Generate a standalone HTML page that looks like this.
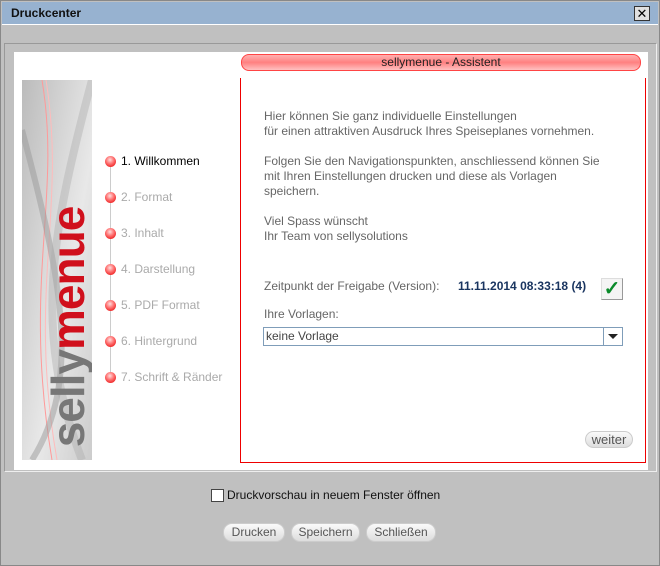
<!DOCTYPE html>
<html><head><style>
body{margin:0;width:660px;height:566px;overflow:hidden;background:#c0c0c0;font-family:"Liberation Sans",sans-serif;position:relative}
.a{position:absolute}
.t{font-size:12px;color:#666}
.step{position:absolute;left:107px;font-size:12px;color:#aaa}
.dot{position:absolute;left:105px;width:11px;height:11px;border-radius:50%;background:radial-gradient(circle at 45% 35%,#fdd 0,#f77 40%,#e22 80%)}
.btn{position:absolute;height:17px;border-radius:9px;background:linear-gradient(#fafafa,#ddd);border:1px solid #ccc;font-size:12px;color:#555;text-align:center;line-height:17px}
</style></head><body>
<div class="a" style="left:0;top:0;width:658px;height:564px;border:1px solid #888"></div>
<div class="a" style="left:2px;top:2px;width:656px;height:22px;background:#97b2d0;border-bottom:1px solid #fff"></div>
<div class="a" style="left:11px;top:6px;font-size:12px;font-weight:bold;color:#111">Druckcenter</div>
<div class="a" style="left:634px;top:6px;width:14px;height:13px;background:#e0e0e0;border:1px solid #333;font-size:13px;line-height:13px;text-align:center">✕</div>
<div class="a" style="left:4px;top:43px;width:651px;height:427px;border:1px solid #999;border-right-color:#eee;border-bottom-color:#eee"></div>
<div class="a" style="left:14px;top:52px;width:634px;height:418px;background:#fff"></div>
<div class="a" style="left:22px;top:80px;width:70px;height:380px;background:linear-gradient(100deg,#bbb,#e8e8e8 60%,#ccc);overflow:hidden">
<svg width="70" height="380" style="position:absolute;left:0;top:0"><path d="M20 0 C40 120 0 200 30 380" stroke="#f99" fill="none"/><path d="M24 0 C45 130 5 210 35 380" stroke="#fbb" fill="none"/><path d="M0 50 C40 200 60 300 10 380" stroke="#999" stroke-width="6" fill="none" opacity=".5"/><path d="M70 0 C30 150 10 250 60 380" stroke="#aaa" stroke-width="8" fill="none" opacity=".4"/></svg>
<div class="a" style="left:-104px;top:223px;width:300px;height:48px;transform:rotate(-90deg);font-size:46px;font-weight:bold;line-height:48px;text-align:center;letter-spacing:-1px"><span style="color:#777">selly</span><span style="color:#d0101c">menue</span></div>
</div>
<div class="a" style="left:110px;top:165px;width:1px;height:212px;background:#ccc"></div>
<div class="dot" style="top:156px"></div><div class="step" style="left:121px;top:154px;color:#000">1. Willkommen</div>
<div class="dot" style="top:192px"></div><div class="step" style="left:121px;top:190px">2. Format</div>
<div class="dot" style="top:228px"></div><div class="step" style="left:121px;top:226px">3. Inhalt</div>
<div class="dot" style="top:264px"></div><div class="step" style="left:121px;top:262px">4. Darstellung</div>
<div class="dot" style="top:300px"></div><div class="step" style="left:121px;top:298px">5. PDF Format</div>
<div class="dot" style="top:336px"></div><div class="step" style="left:121px;top:334px">6. Hintergrund</div>
<div class="dot" style="top:372px"></div><div class="step" style="left:121px;top:370px">7. Schrift &amp; Ränder</div>
<div class="a" style="left:241px;top:54px;width:398px;height:15px;border:1px solid #f44;border-radius:8px;background:linear-gradient(#ffb0b0,#ff8080 50%,#ffc0c0);font-size:12px;text-align:center;line-height:15px;color:#222">sellymenue - Assistent</div>
<div class="a" style="left:240px;top:78px;width:404px;height:384px;border-left:1px solid #e00;border-right:1px solid #e00;border-bottom:1px solid #e00"></div>
<div class="a t" style="left:264px;top:109px;line-height:15px">Hier können Sie ganz individuelle Einstellungen<br>für einen attraktiven Ausdruck Ihres Speiseplanes vornehmen.<br><br>Folgen Sie den Navigationspunkten, anschliessend können Sie<br>mit Ihren Einstellungen drucken und diese als Vorlagen<br>speichern.<br><br>Viel Spass wünscht<br>Ihr Team von sellysolutions</div>
<div class="a t" style="left:264px;top:279px">Zeitpunkt der Freigabe (Version):</div>
<div class="a" style="left:458px;top:279px;font-size:12px;font-weight:bold;color:#1a3560">11.11.2014 08:33:18 (4)</div>
<div class="a" style="left:601px;top:278px;width:20px;height:20px;background:#f4f4f4;border:1px solid #ddd;border-right-color:#999;border-bottom-color:#999;color:#0a8a2a;font-size:20px;font-weight:bold;line-height:20px;text-align:center">✓</div>
<div class="a t" style="left:264px;top:307px">Ihre Vorlagen:</div>
<div class="a" style="left:263px;top:327px;width:358px;height:17px;border:1px solid #7f9db9;background:#fff"></div>
<div class="a t" style="left:266px;top:329px;color:#444">keine Vorlage</div>
<div class="a" style="left:603px;top:328px;width:1px;height:17px;background:#7f9db9"></div>
<div class="a" style="left:608px;top:334px;width:0;height:0;border-left:5px solid transparent;border-right:5px solid transparent;border-top:5px solid #222"></div>
<div class="btn" style="left:585px;top:431px;width:46px;height:15px;line-height:15px;font-size:13px">weiter</div>
<div class="a" style="left:211px;top:489px;width:11px;height:11px;background:#fff;border:1px solid #444"></div>
<div class="a" style="left:227px;top:488px;font-size:12px;color:#111">Druckvorschau in neuem Fenster öffnen</div>
<div class="btn" style="left:223px;top:523px;width:60px">Drucken</div>
<div class="btn" style="left:291px;top:523px;width:67px">Speichern</div>
<div class="btn" style="left:366px;top:523px;width:68px">Schließen</div>
</body></html>
